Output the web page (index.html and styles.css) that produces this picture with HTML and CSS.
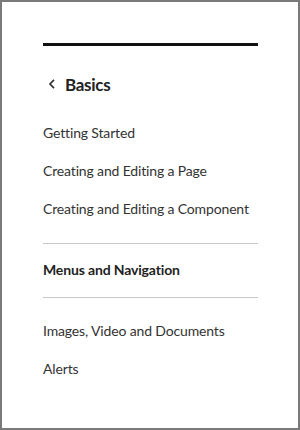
FILE: index.html
```html
<!DOCTYPE html>
<html lang="en">
<head>
    <meta charset="UTF-8">
    <meta name="viewport" content="width=device-width, initial-scale=1.0">
    <title>Basics</title>
    <link rel="stylesheet" href="styles.css">
</head>
<body>
    <div class="frame">
        <div class="rule"></div>
        <div class="back">
            <svg class="chevron" width="8" height="12" viewBox="0 0 8 12">
                <path d="M6 1.8 L2 6 L6 10.2" fill="none" stroke="#333" stroke-width="1.7"/>
            </svg>
            <strong>Basics</strong>
        </div>
        <div class="group">
            <div class="item">Getting Started</div>
            <div class="item">Creating and Editing a Page</div>
            <div class="item">Creating and Editing a Component</div>
        </div>
        <div class="sep sep-top"></div>
        <div class="item active">Menus and Navigation</div>
        <div class="sep sep-bottom"></div>
        <div class="group">
            <div class="item">Images, Video and Documents</div>
            <div class="item">Alerts</div>
        </div>
    </div>
</body>
</html>
```

FILE: styles.css
```css
body {
    margin: 0;
    padding: 0;
    font-family: Lato, "Liberation Sans", sans-serif;
    color: #333;
    background-color: #fff;
}
.frame {
    box-sizing: border-box;
    width: 300px;
    height: 430px;
    border: 2px solid #7a7a7a;
    padding: 41px 40px 0 41px;
}
.rule {
    height: 3px;
    background-color: #111;
}
.back {
    display: flex;
    align-items: center;
    gap: 9px;
    margin-top: 26px;
    padding-left: 5px;
    height: 24px;
    font-size: 17px;
    letter-spacing: -0.3px;
}
.back strong {
    font-weight: 700;
    color: #222;
}
.group {
    margin-top: 18px;
}
.item {
    font-size: 14px;
    line-height: 20px;
    padding: 9px 0;
    letter-spacing: -0.15px;
}
.item.active {
    font-weight: 700;
    color: #222;
}
.sep {
    height: 1px;
    background-color: #c8c8c8;
}
.sep-top {
    margin: 15px 0 7px;
}
.sep-bottom {
    margin: 8px 0 0;
}
.sep-bottom + .group {
    margin-top: 14px;
}
```
